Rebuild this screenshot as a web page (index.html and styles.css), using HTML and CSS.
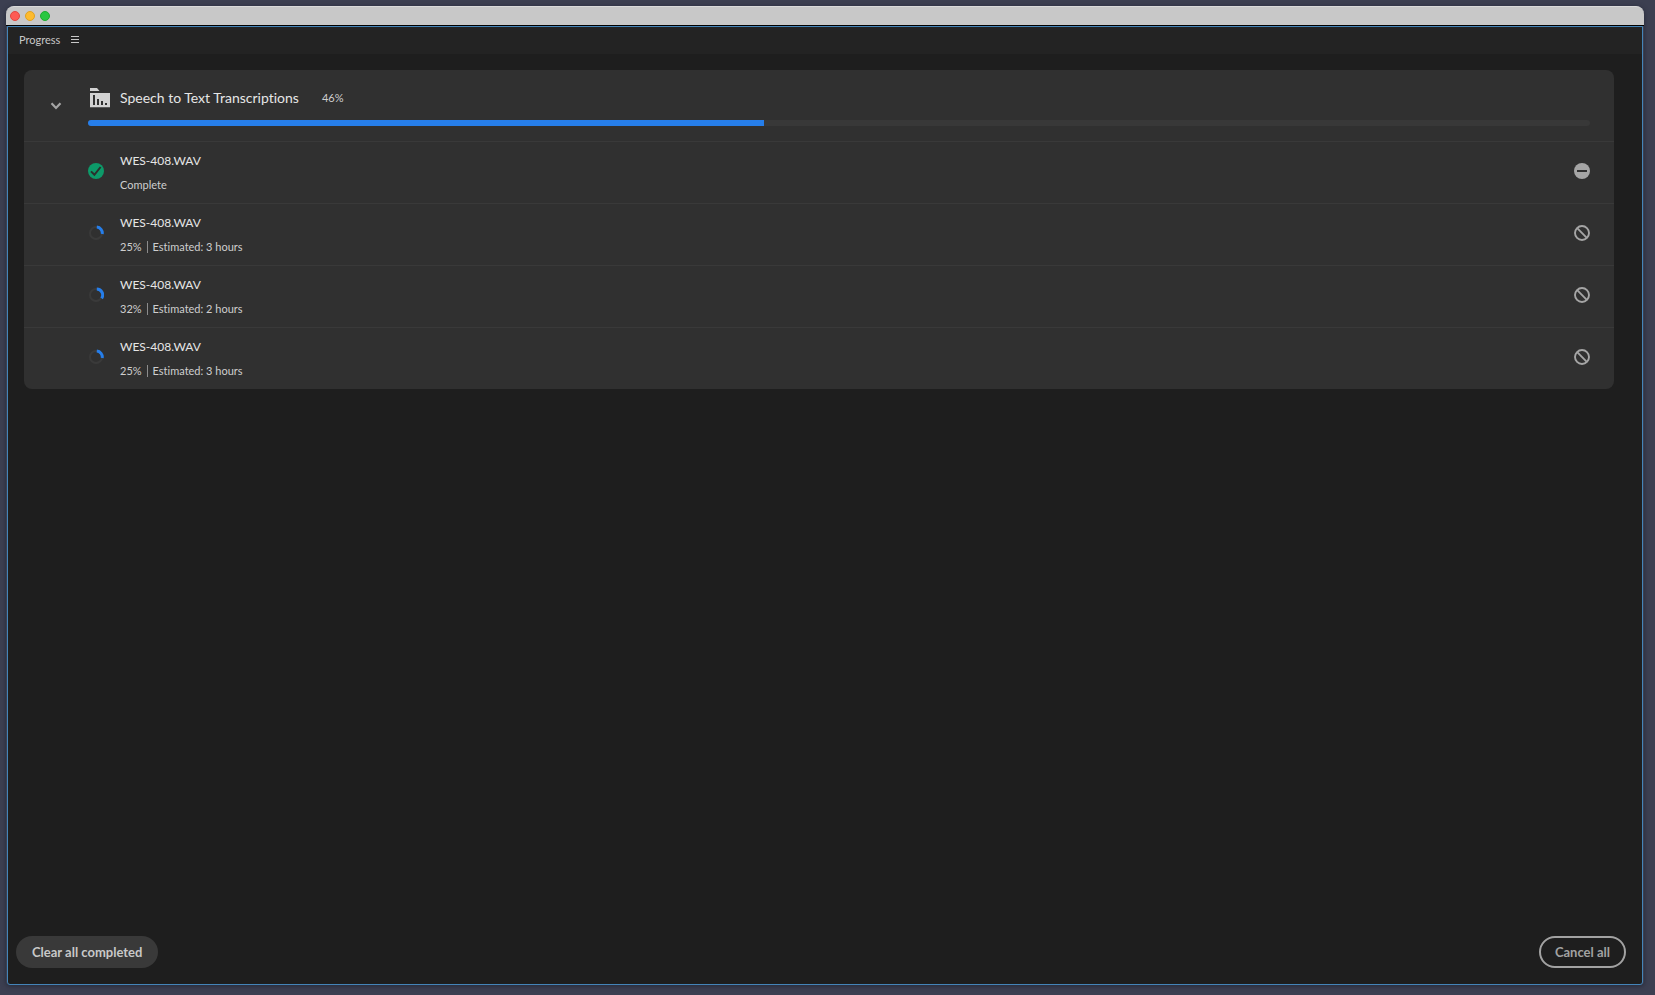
FILE: index.html
```
<!doctype html>
<html lang="en">
<head>
<meta charset="UTF-8"/>
<link rel="stylesheet" href="styles.css">
<title>Progress</title>
</head>
<body>
<svg class="symbols" aria-hidden="true">
  <symbol id="ban" viewBox="0 0 16 16">
    <circle cx="8" cy="8" r="7" fill="none" stroke="currentColor" stroke-width="1.9"/>
    <path d="M3.2 3.2L12.8 12.8" stroke="currentColor" stroke-width="1.9"/>
  </symbol>
</svg>
<div class="window">
  <div class="titlebar">
    <span class="light close"></span>
    <span class="light minimize"></span>
    <span class="light zoom"></span>
  </div>
  <div class="panel">
    <header class="tab">
      <h1>Progress</h1>
      <button class="icon-button" type="button" aria-label="Panel menu">
        <svg width="8" height="7" viewBox="0 0 8 7"><path d="M0 .5H8M0 3.500H8M0 6.500H8" stroke="#c8c8c8"/></svg>
      </button>
    </header>
    <main>
      <section class="group">
        <div class="group-header">
          <button class="icon-button toggle" type="button" aria-label="Collapse">
            <svg width="12" height="8" viewBox="0 0 12 8"><path d="M1.5 1.2L6 5.9L10.5 1.2" fill="none" stroke="currentColor" stroke-width="2.2"/></svg>
          </button>
          <div class="group-body">
            <div class="group-title">
              <svg class="folder" width="20" height="20" viewBox="0 0 20 20">
                <path fill="#d2d2d2" d="M0 0H7L9.5 3H0ZM0 5H20V19.300H0Z"/>
                <path fill="#303030" d="M3 7H5V17H3ZM7 11H9V17H7ZM11 13H13V17H11ZM15 15H17V17H15Z"/>
              </svg>
              <h2>Speech to Text Transcriptions</h2>
              <span class="percent">46%</span>
            </div>
            <div class="bar" role="progressbar" aria-label="Speech to Text Transcriptions" aria-valuenow="46">
              <div class="bar-fill" style="width:45%"></div>
            </div>
          </div>
        </div>
        <ul class="jobs">
          <li>
            <svg class="status" width="16" height="16" viewBox="0 0 16 16">
              <circle cx="8" cy="8" r="8" fill="#0d9a69"/>
              <path d="M3 8.400L6.400 11.800L12.600 4" fill="none" stroke="#2b2f2d" stroke-width="2"/>
            </svg>
            <div class="job">
              <div class="name">WES-408.WAV</div>
              <div class="detail">Complete</div>
            </div>
            <button class="icon-button" type="button" aria-label="Remove">
              <svg width="16" height="16" viewBox="0 0 16 16"><circle cx="8" cy="8" r="8" fill="currentColor"/><path d="M3 8H13" stroke="#303030" stroke-width="2"/></svg>
            </button>
          </li>
          <li>
            <svg class="status" width="16" height="16" viewBox="0 0 16 16">
              <circle class="track" cx="8" cy="8" r="6"/>
              <path class="arc" d="M8.800 2A6 6 0 0 1 14.200 9"/>
            </svg>
            <div class="job">
              <div class="name">WES-408.WAV</div>
              <div class="detail"><span>25%</span><span class="rule"></span><span>Estimated: 3 hours</span></div>
            </div>
            <button class="icon-button" type="button" aria-label="Cancel">
              <svg width="16" height="16"><use href="#ban"/></svg>
            </button>
          </li>
          <li>
            <svg class="status" width="16" height="16" viewBox="0 0 16 16">
              <circle class="track" cx="8" cy="8" r="6"/>
              <path class="arc" d="M8.800 2A6 6 0 0 1 13.600 11.400"/>
            </svg>
            <div class="job">
              <div class="name">WES-408.WAV</div>
              <div class="detail"><span>32%</span><span class="rule"></span><span>Estimated: 2 hours</span></div>
            </div>
            <button class="icon-button" type="button" aria-label="Cancel">
              <svg width="16" height="16"><use href="#ban"/></svg>
            </button>
          </li>
          <li>
            <svg class="status" width="16" height="16" viewBox="0 0 16 16">
              <circle class="track" cx="8" cy="8" r="6"/>
              <path class="arc" d="M8.800 2A6 6 0 0 1 14.200 9"/>
            </svg>
            <div class="job">
              <div class="name">WES-408.WAV</div>
              <div class="detail"><span>25%</span><span class="rule"></span><span>Estimated: 3 hours</span></div>
            </div>
            <button class="icon-button" type="button" aria-label="Cancel">
              <svg width="16" height="16"><use href="#ban"/></svg>
            </button>
          </li>
        </ul>
      </section>
    </main>
    <footer>
      <button class="pill" type="button">Clear all completed</button>
      <button class="pill outline" type="button">Cancel all</button>
    </footer>
  </div>
</div>
</body>
</html>
```
FILE: styles.css
```
* {
  box-sizing: border-box;
}
body {
  margin: 0;
  padding: 6px 11px 10px 6px;
  height: 100vh;
  display: flex;
  background: #3c3f51;
  color: #cecece;
  font-family: Lato, "Liberation Sans", sans-serif;
  font-size: 11px;
  font-variant-ligatures: none;
}
h1, h2, ul {
  margin: 0;
  padding: 0;
  font-weight: normal;
}
button {
  font-family: inherit;
  cursor: pointer;
}
.symbols {
  position: absolute;
  width: 0;
  height: 0;
}
.window {
  flex: 1;
  display: flex;
  flex-direction: column;
  border-radius: 8px 8px 4px 4px;
  box-shadow: 0 1px 5px #252938;
}
.titlebar {
  display: flex;
  align-items: center;
  gap: 5px;
  height: 20px;
  padding: 0 4px 1px;
  background: #c8c8c8;
  border-top: 1px solid #dadada;
  border-bottom: 1px solid #000;
  border-radius: 8px 8px 0 0;
}
.light {
  width: 10px;
  height: 10px;
  border-radius: 50%;
}
.close {
  background: #fd5b54;
  border: 1px solid #e2463f;
}
.minimize {
  background: #fdbb2e;
  border: 1px solid #e0a11f;
}
.zoom {
  background: #28c740;
  border: 1px solid #1dab2e;
}
.panel {
  flex: 1;
  display: flex;
  flex-direction: column;
  margin: 0 1px;
  background: #1e1e1e;
  border: 1px solid #4484b8;
  border-radius: 0 0 3px 3px;
}
.tab {
  display: flex;
  align-items: center;
  gap: 11px;
  height: 27px;
  padding: 0 11px 2px;
  background: #232323;
  color: #c8c8c8;
}
.tab h1 {
  font-size: 11px;
}
.icon-button {
  display: flex;
  padding: 0;
  border: 0;
  background: none;
  color: #a5a5a5;
}
main {
  flex: 1;
  padding: 16px 28px 16px 16px;
}
.group {
  background: #303030;
  border-radius: 8px;
}
.group-header {
  display: flex;
  align-items: center;
  height: 71px;
  padding: 0 24px 0 26px;
}
.toggle {
  width: 38px;
}
.group-body {
  flex: 1;
}
.group-title {
  display: flex;
  align-items: center;
  height: 24px;
  margin-bottom: 10px;
}
.folder {
  margin: 0 10px 0 2px;
}
.group-title h2 {
  color: #e6e6e6;
  font-size: 14px;
}
.percent {
  margin-left: 23px;
}
.bar {
  height: 6px;
  background: #383838;
  border-radius: 3px;
  overflow: hidden;
}
.bar-fill {
  height: 100%;
  background: #267eea;
}
.jobs {
  list-style: none;
}
.jobs li {
  display: flex;
  align-items: center;
  height: 62px;
  padding: 0 24px 3px 64px;
  border-top: 1px solid #393939;
}
.job {
  flex: 1;
  padding: 3px 0 0 16px;
}
.name {
  color: #e6e6e6;
  font-size: 12px;
  line-height: 24px;
}
.detail {
  display: flex;
  align-items: center;
  height: 24px;
}
.rule {
  width: 1px;
  height: 12px;
  margin: 0 5px;
  background: #8c8c8c;
}
.track {
  fill: none;
  stroke: #3a3a3a;
  stroke-width: 2;
}
.arc {
  fill: none;
  stroke: #267eea;
  stroke-width: 3;
}
footer {
  display: flex;
  justify-content: space-between;
  padding: 0 16px 16px 8px;
}
.pill {
  height: 32px;
  padding: 0 16px;
  border: 0;
  border-radius: 16px;
  background: #393939;
  color: #c8c8c8;
  font-size: 13px;
  font-weight: bold;
}
.outline {
  padding: 0 14px;
  border: 2px solid #a2a2a2;
  background: none;
  color: #a2a2a2;
}
```
